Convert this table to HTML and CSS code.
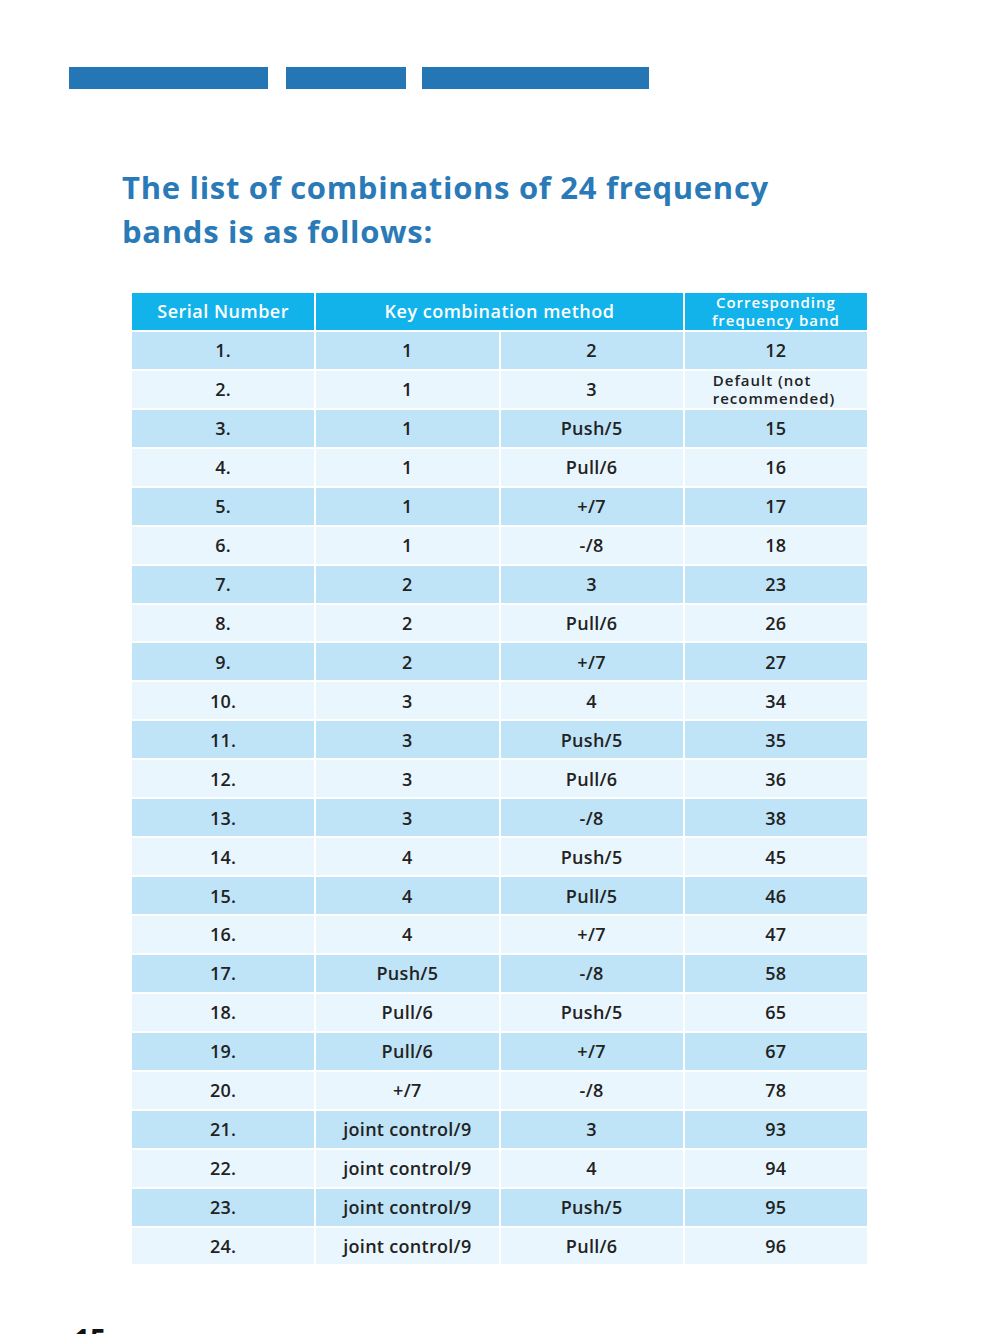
FILE: index.html
```html
<!DOCTYPE html>
<html lang="en">
<head>
    <meta charset="UTF-8">
    <title>24 Frequency Bands</title>
    <link rel="stylesheet" href="styles.css">
</head>
<body>
    <div class="page">
        <div class="bars">
            <span class="bar bar-a"></span>
            <span class="bar bar-b"></span>
            <span class="bar bar-c"></span>
        </div>

        <h1 class="title">The list of combinations of 24 frequency<br>bands is as follows:</h1>

        <table class="bands">
            <thead>
                <tr>
                    <th>Serial Number</th>
                    <th colspan="2">Key combination method</th>
                    <th class="small"><span>Corresponding</span><span>frequency band</span></th>
                </tr>
            </thead>
            <tbody>
                <tr><td>1.</td><td>1</td><td>2</td><td>12</td></tr>
                <tr><td>2.</td><td>1</td><td>3</td><td class="note"><span>Default (not</span><span>recommended)</span></td></tr>
                <tr><td>3.</td><td>1</td><td>Push/5</td><td>15</td></tr>
                <tr><td>4.</td><td>1</td><td>Pull/6</td><td>16</td></tr>
                <tr><td>5.</td><td>1</td><td>+/7</td><td>17</td></tr>
                <tr><td>6.</td><td>1</td><td>-/8</td><td>18</td></tr>
                <tr><td>7.</td><td>2</td><td>3</td><td>23</td></tr>
                <tr><td>8.</td><td>2</td><td>Pull/6</td><td>26</td></tr>
                <tr><td>9.</td><td>2</td><td>+/7</td><td>27</td></tr>
                <tr><td>10.</td><td>3</td><td>4</td><td>34</td></tr>
                <tr><td>11.</td><td>3</td><td>Push/5</td><td>35</td></tr>
                <tr><td>12.</td><td>3</td><td>Pull/6</td><td>36</td></tr>
                <tr><td>13.</td><td>3</td><td>-/8</td><td>38</td></tr>
                <tr><td>14.</td><td>4</td><td>Push/5</td><td>45</td></tr>
                <tr><td>15.</td><td>4</td><td>Pull/5</td><td>46</td></tr>
                <tr><td>16.</td><td>4</td><td>+/7</td><td>47</td></tr>
                <tr><td>17.</td><td>Push/5</td><td>-/8</td><td>58</td></tr>
                <tr><td>18.</td><td>Pull/6</td><td>Push/5</td><td>65</td></tr>
                <tr><td>19.</td><td>Pull/6</td><td>+/7</td><td>67</td></tr>
                <tr><td>20.</td><td>+/7</td><td>-/8</td><td>78</td></tr>
                <tr><td>21.</td><td>joint control/9</td><td>3</td><td>93</td></tr>
                <tr><td>22.</td><td>joint control/9</td><td>4</td><td>94</td></tr>
                <tr><td>23.</td><td>joint control/9</td><td>Push/5</td><td>95</td></tr>
                <tr><td>24.</td><td>joint control/9</td><td>Pull/6</td><td>96</td></tr>
            </tbody>
        </table>

        <div class="page-number">15</div>
    </div>
</body>
</html>
```

FILE: styles.css
```css
:root {
    --brand: #2477b4;
    --title: #2a7ab7;
    --head: #12b3ea;
    --row-dark: #bfe4f7;
    --row-light: #eaf6fd;
    --text: #222;
}

* {
    box-sizing: border-box;
    margin: 0;
    padding: 0;
}

body {
    background: #fff;
    color: var(--text);
    font-family: 'Open Sans', 'Noto Sans', sans-serif;
    overflow: hidden;
}

.page {
    width: 1000px;
    height: 1334px;
    padding-top: 67px;
}

.bars {
    display: flex;
    margin-left: 69px;
}

.bar {
    display: block;
    height: 22px;
    background: var(--brand);
}

.bar-a { width: 199px; margin-right: 18px; }
.bar-b { width: 120px; margin-right: 16px; }
.bar-c { width: 227px; }

.title {
    margin: 76px 0 0 122px;
    color: var(--title);
    font-size: 31px;
    font-weight: 700;
    line-height: 44px;
    letter-spacing: 0.7px;
}

.bands {
    margin: 38px 0 0 130px;
    width: 739px;
    border-collapse: separate;
    border-spacing: 2px;
    table-layout: fixed;
}

.bands th,
.bands td {
    height: 36.95px;
    text-align: center;
    vertical-align: middle;
    font-size: 18px;
    font-weight: 600;
    letter-spacing: 0.3px;
    line-height: 20px;
}

.bands th {
    background: var(--head);
    color: #fff;
    letter-spacing: 0.5px;
}

.bands th.small span,
.bands td.note span {
    display: block;
    height: 18px;
    line-height: 18px;
}

.bands th.small {
    font-size: 15px;
    letter-spacing: 1px;
}

.bands tbody tr:nth-child(odd) td {
    background: var(--row-dark);
}

.bands tbody tr:nth-child(even) td {
    background: var(--row-light);
}

.bands td.note {
    font-size: 15px;
    text-align: left;
    padding-left: 28px;
    letter-spacing: 1px;
}

.page-number {
    margin: 54px 0 0 74px;
    font-size: 28px;
    font-weight: 700;
    color: #111;
}
```
